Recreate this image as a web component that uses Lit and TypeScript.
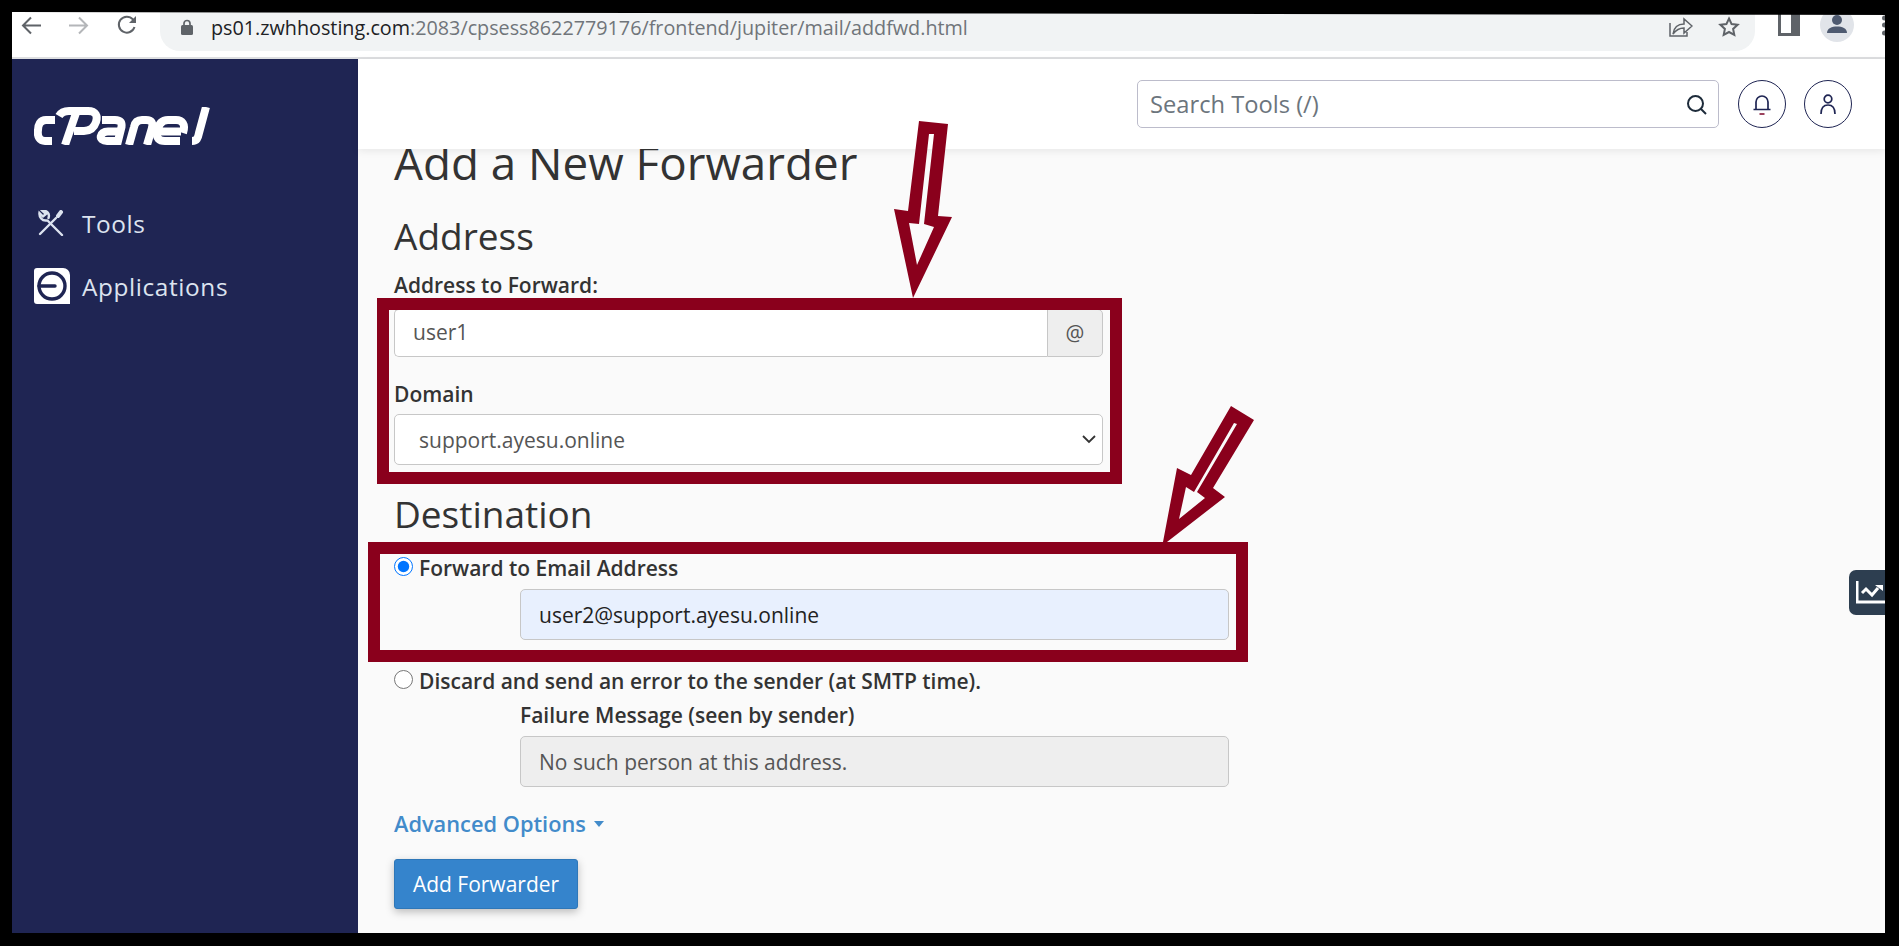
import { LitElement, html, css } from "lit";
import { customElement } from "lit/decorators.js";

@customElement("app-root")
export class AppRoot extends LitElement {
  static styles = css`
    :host {
      display: block;
      width: 1899px;
      height: 946px;
      background: #000;
      overflow: hidden;
      position: relative;
      font-family: "Open Sans", "Noto Sans", sans-serif;
      color: #333;
    }
    * { box-sizing: border-box; }
    .frame {
      height: 946px;
      padding: 12px 14px 13px 12px;
      display: flex;
      flex-direction: column;
    }
    .chrome {
      height: 47px;
      flex: none;
      background: #fff;
      border-bottom: 2px solid #dedfe1;
      display: flex;
      align-items: flex-start;
      overflow: hidden;
      padding-left: 9px;
    }
    .nav { display: flex; gap: 28px; padding-top: 4px; width: 139px; flex: none; }
    .nav svg { width: 20px; height: 20px; display: block; }
    .reload { margin-top: -1px; }
    .omni {
      width: 1595px;
      height: 39px;
      flex: none;
      background: #f1f3f4;
      border-radius: 0 0 20px 20px;
      display: flex;
      align-items: center;
      padding: 0 15px 9px 21px;
      font-size: 19.75px;
      color: #70757a;
    }
    .omni b { font-weight: 400; color: #202124; }
    .lock { width: 12px; height: 16px; margin-right: 18px; flex: none; }
    .url { flex: 1; white-space: nowrap; }
    .tbi { display: block; flex: none; }
    .share { margin-right: 25px; margin-bottom: 4px; }
    .right-tools { display: flex; align-items: flex-start; padding-left: 23px; }
    .avatar { margin-left: 20px; margin-top: -4px; }
    .dots { margin-left: 28px; }
    .main { flex: 1; min-height: 0; display: flex; }
    .side {
      width: 346px;
      flex: none;
      background: #1f2553;
      padding: 48px 0 0 22px;
    }
    .logo { display: block; width: 176px; height: 38px; }
    .side-item {
      display: flex;
      align-items: center;
      color: #dce3ef;
      font-size: 24.4px;
      letter-spacing: 0.6px;
      height: 36px;
    }
    .side-item svg { display: block; flex: none; }
    .tools { margin-top: 60px; }
    .tools svg { margin-left: 4px; margin-right: 18px; }
    .apps { margin-top: 27px; }
    .apps svg { margin-right: 12px; }
    .col { flex: 1; min-width: 0; display: flex; flex-direction: column; position: relative; }
    .head {
      height: 90px;
      flex: none;
      background: #fff;
      box-shadow: 0 2px 8px rgba(0, 0, 0, 0.08);
      position: relative;
      z-index: 2;
      display: flex;
      align-items: center;
      justify-content: flex-end;
      gap: 18px;
      padding-right: 33px;
    }
    .search {
      width: 582px;
      height: 48px;
      margin-right: 1px;
      border: 1px solid #bcbccb;
      border-radius: 5px;
      display: flex;
      align-items: center;
      padding: 0 11px 0 12px;
      font-size: 23.7px;
      color: #6c757d;
    }
    .search span { flex: 1; }
    .circle {
      width: 48px;
      height: 48px;
      border: 1.5px solid #1f2553;
      border-radius: 50%;
      display: flex;
      align-items: center;
      justify-content: center;
    }
    .content {
      flex: 1;
      min-height: 0;
      background: #fafafa;
      padding-left: 36px;
      overflow: hidden;
    }
    h1 {
      font-size: 45.75px;
      line-height: 50px;
      font-weight: 400;
      margin: -12px 0 0;
    }
    h2 {
      font-size: 37px;
      line-height: 44px;
      font-weight: 400;
      margin: 0;
    }
    .addr { margin-top: 27px; }
    .lab {
      display: block;
      font-size: 21px;
      line-height: 26px;
      font-weight: 600;
    }
    .addr-lab { margin-top: 14px; }
    .control {
      display: block;
      border: 1px solid #c7c7c7;
      border-radius: 5px;
      background: #fff;
      font-family: inherit;
      font-size: 21px;
      color: #555;
      outline: none;
    }
    .ig { display: flex; width: 709px; height: 48px; margin-top: 11px; }
    .ig input { flex: 1; min-width: 0; height: 100%; padding: 0 18px 2px; border-radius: 5px 0 0 5px; border-right: 0; }
    .addon {
      width: 56px;
      border: 1px solid #c7c7c7;
      border-radius: 0 5px 5px 0;
      background: #eee;
      display: flex;
      align-items: center;
      justify-content: center;
      font-size: 21px;
      color: #555;
    }
    .dom-lab { margin-top: 24px; }
    .sel { position: relative; width: 709px; height: 51px; margin-top: 7px; }
    .sel select { width: 100%; height: 100%; padding: 0 24px; appearance: none; -webkit-appearance: none; }
    .sel svg { position: absolute; right: 7px; top: 21px; display: block; }
    .dest { margin-top: 27px; }
    .radio {
      display: flex;
      align-items: center;
      font-size: 21px;
      line-height: 26px;
      font-weight: 600;
      height: 26px;
    }
    .radio input { width: 19px; height: 19px; margin: 0 6px 0 0; flex: none; position: relative; top: -2px; }
    .r1 { margin-top: 19px; }
    .indent { margin-left: 126px; width: 709px; }
    .indent input { width: 100%; height: 51px; padding: 0 18px; }
    .email { margin-top: 8px; }
    input.filled { background: #e8f0fe; color: #222; }
    input.off { background: #eee; color: #555; }
    .r2 { margin-top: 28px; }
    .fail-lab { margin-top: 8px; }
    .off-wrap { margin-top: 8px; }
    .adv {
      margin-top: 23px;
      display: flex;
      align-items: center;
      font-size: 21.8px;
      line-height: 28px;
      font-weight: 600;
      color: #428bca;
    }
    .caret {
      width: 0; height: 0;
      margin-left: 8px;
      border-left: 5.5px solid transparent;
      border-right: 5.5px solid transparent;
      border-top: 6px solid #428bca;
    }
    .btn {
      display: block;
      margin-top: 21px;
      width: 184px;
      height: 50px;
      background: #3584cc;
      color: #fff;
      border: 1px solid #2e77b8;
      border-radius: 3px;
      font-family: inherit;
      font-size: 21px;
      box-shadow: 0 3px 8px rgba(0, 0, 0, 0.25);
    }
    .tab {
      position: absolute;
      right: 0;
      top: 511px;
      width: 36px;
      height: 45px;
      background: #2d3e50;
      border-radius: 7px 0 0 7px;
      padding: 11px 0 0 7px;
      overflow: hidden;
    }
    .tab svg { display: block; }
    .marks { position: absolute; left: 0; top: 0; pointer-events: none; z-index: 5; }
  `;

  render() {
    return html`
      <div class="frame">
        <div class="chrome">
          <div class="nav">
            <svg viewBox="0 0 20 20" fill="none" stroke="#5f6368" stroke-width="2"><path d="M20 9.500H2M10 1.500 2 9.500l8 8"/></svg>
            <svg viewBox="0 0 20 20" fill="none" stroke="#b4b6b9" stroke-width="2"><path d="M0 9.500h18M10 1.500l8 8-8 8"/></svg>
            <svg class="reload" viewBox="0 0 20 20" fill="none" stroke="#5f6368" stroke-width="2"><path d="M17.500 12a8 8 0 1 1-1.600-7.600L18 7"/><path d="M19 1v7h-7z" fill="#5f6368" stroke="none"/></svg>
          </div>
          <div class="omni">
            <svg class="lock" viewBox="0 0 12 16"><path d="M3 7V4.500a3 3 0 0 1 6 0V7" fill="none" stroke="#5f6368" stroke-width="1.700"/><rect x="0" y="6" width="12" height="10" rx="1.500" fill="#5f6368"/></svg>
            <div class="url"><b>ps01.zwhhosting.com</b>:2083/cpsess8622779176/frontend/jupiter/mail/addfwd.html</div>
            <svg class="tbi share" width="24" height="24" viewBox="0 0 24 24" fill="none" stroke="#5f6368" stroke-width="1.500"><path d="M1 10v13h17v-4M4 21c1-7 5-10 11-10V6l8 7-8 7v-5c-5 0-8 2-11 6z"/></svg>
            <svg class="tbi" width="22" height="22" viewBox="0 0 22 22" fill="none" stroke="#5f6368" stroke-width="2"><path d="m11 2.500 2.600 5.600 6 .7-4.500 4.100 1.200 6L11 16l-5.300 2.900 1.200-6-4.500-4.100 6-.7z"/></svg>
          </div>
          <div class="right-tools">
            <svg class="tbi" width="22" height="24" viewBox="0 0 22 24"><path d="M0 0h22v24H0z" fill="#5f6368"/><path d="M3 0h10v21H3z" fill="#fff"/></svg>
            <svg class="tbi avatar" width="34" height="34" viewBox="0 0 34 34"><circle cx="17" cy="17" r="17" fill="#e1e4e9"/><circle cx="17" cy="12" r="5" fill="#4e5a70"/><path d="M7 25c0-5 5-6.500 10-6.500s10 1.500 10 6.500z" fill="#4e5a70"/></svg>
            <svg class="tbi dots" width="4" height="26" viewBox="0 0 4 26" fill="#5f6368"><circle cx="2.500" cy="6" r="2.500"/><circle cx="2.500" cy="13" r="2.500"/><circle cx="2.500" cy="21" r="2.500"/></svg>
          </div>
        </div>
        <div class="main">
          <aside class="side">
            <svg class="logo" viewBox="0 0 176 38" fill="none" stroke="#fff" stroke-width="8" role="img" aria-label="cPanel">
              <path d="M21 13H12C6 13 4 18 4 23 3 30 6 34 11 34H18"/>
              <path d="M25 9C27 5.500 31 4 35 4H54C62 4 64 9 62 15 60 21 56 24 50 24H40"/>
              <path d="M42 6 31 38"/>
              <path d="M68 13H81C87 13 88 16 87.500 20L84 34H73C64 34 65 24.500 74 24.500H85"/>
              <path d="M95 38 100 20C101 15 104 13 108 13H112C118 13 119 16 118 21L113 38"/>
              <path d="M147 24.500H126M149 26C152 17 148 13 142 13H134C127 13 124 19 123 25 122 31 125 34 131 34H146"/>
              <path d="M172 0 165 26C164 31 163 34 158 34"/>
            </svg>
            <div class="side-item tools">
              <svg width="26" height="26" viewBox="0 0 26 26" fill="none" stroke="#dce3ef" stroke-width="2.400" stroke-linecap="round"><path d="M2 24 18 8"/><path d="M20 6l3-4" stroke-width="4"/><path d="M9.500 10.500 24 25M8.500 10.500C4 11 1 7 1.500 3L5 6.500 8 4 4.500 1C9 0 12 4 10.500 8"/></svg>
              Tools
            </div>
            <div class="side-item apps">
              <svg width="36" height="36" viewBox="0 0 36 36"><path d="M0 3a3 3 0 0 1 3-3h26a7 7 0 0 1 7 7v29H3a3 3 0 0 1-3-3z" fill="#fff"/><circle cx="18" cy="18" r="13" fill="none" stroke="#1f2553" stroke-width="3.400"/><path d="M5 18h16" stroke="#1f2553" stroke-width="3.400" stroke-linecap="round"/></svg>
              Applications
            </div>
          </aside>
          <div class="col">
            <header class="head">
              <div class="search">
                <span>Search Tools (/)</span>
                <svg width="21" height="21" viewBox="0 0 21 21" fill="none" stroke="#1d2b3a" stroke-width="2"><circle cx="9.500" cy="9.500" r="7.500"/><path d="m15 15 5 5"/></svg>
              </div>
              <div class="circle">
                <svg width="18" height="21" viewBox="0 0 18 21" fill="none" stroke="#1f2553" stroke-width="1.700"><path d="M3 15V8a6 6 0 0 1 12 0v7M0.500 15.500h17"/><path d="M6.500 20h5" stroke="#8a2040"/></svg>
              </div>
              <div class="circle">
                <svg width="16" height="21" viewBox="0 0 16 21" fill="none" stroke="#1f2553" stroke-width="1.700"><circle cx="8" cy="5" r="3.800"/><path d="M1 20c0-6 3-9 7-9s7 3 7 9"/></svg>
              </div>
            </header>
            <main class="content">
              <h1>Add a New Forwarder</h1>
              <h2 class="addr">Address</h2>
              <label class="lab addr-lab">Address to Forward:</label>
              <div class="ig">
                <input class="control" .value=${"user1"} />
                <div class="addon">@</div>
              </div>
              <label class="lab dom-lab">Domain</label>
              <div class="sel">
                <select class="control"><option>support.ayesu.online</option></select>
                <svg width="14" height="9" viewBox="0 0 14 9" fill="none" stroke="#333" stroke-width="1.800"><path d="m1 1 6 6 6-6"/></svg>
              </div>
              <h2 class="dest">Destination</h2>
              <label class="radio r1"><input type="radio" name="d" checked />Forward to Email Address</label>
              <div class="indent email"><input class="control filled" .value=${"user2@support.ayesu.online"} /></div>
              <label class="radio r2"><input type="radio" name="d" />Discard and send an error to the sender (at SMTP time).</label>
              <div class="indent">
                <label class="lab fail-lab">Failure Message (seen by sender)</label>
                <div class="off-wrap"><input class="control off" disabled .value=${"No such person at this address."} /></div>
              </div>
              <div class="adv">Advanced Options<span class="caret"></span></div>
              <button class="btn">Add Forwarder</button>
            </main>
            <div class="tab">
              <svg width="29" height="24" viewBox="0 0 29 24" fill="none" stroke="#fff" stroke-width="3"><path d="M1 0v21h28"/><path d="M6 12l4-4 6 6 6-7"/><path d="M19 4h8v6z" fill="#fff" stroke="none"/></svg>
            </div>
          </div>
        </div>
      </div>
      <svg class="marks" width="1899" height="946" viewBox="0 0 1899 946">
        <path d="M0 0H1899V15L12 12H0z" fill="#000"/>
        <path fill="#8a001c" fill-rule="evenodd" d="M377 298H1122V484H377zM389 310V472H1110V310z"/>
        <path fill="#8a001c" fill-rule="evenodd" d="M368 542H1248V662H368zM380 554V650H1236V554z"/>
        <path fill="#8a001c" fill-rule="evenodd" d="M919 121 948 124 938 216 952 217 913 298 894 209 908 211zM929 134 919 224 909 223 917 265 934 227 924 224 934 134z"/>
        <path fill="#8a001c" fill-rule="evenodd" d="M1231 406 1254 420 1213 488 1225 497 1167 542 1163 542 1177 468 1191 475zM1234 423 1194 492 1186 487 1179 519 1205 498 1197 492 1237 424z"/>
      </svg>
    `;
  }
}
